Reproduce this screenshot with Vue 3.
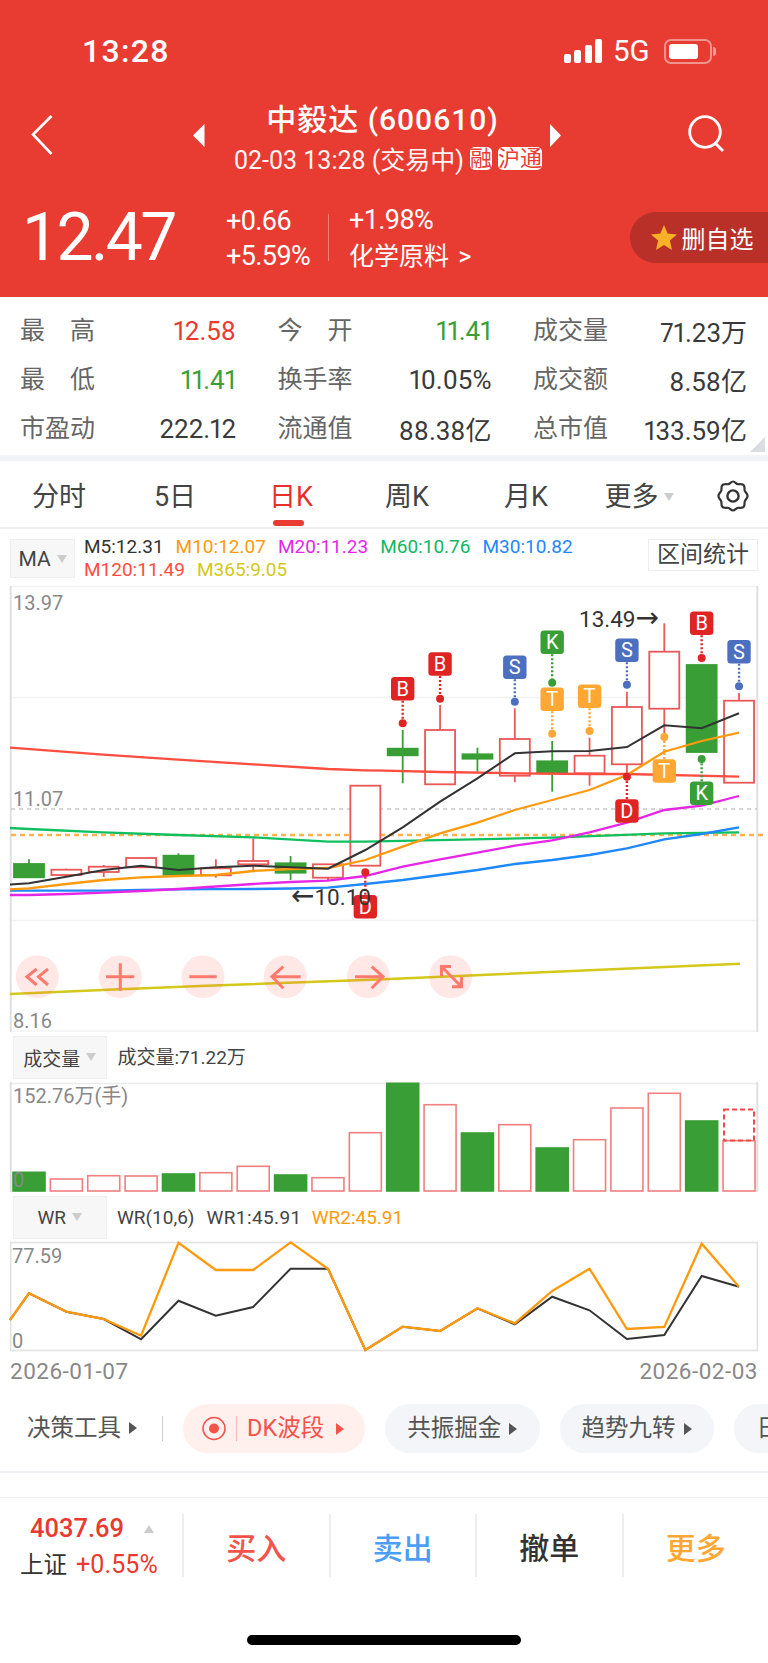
<script setup>
const stats = [
  [['最 高', '12.58', 'up'], ['今 开', '11.41', 'down'], ['成交量', '71.23万', '']],
  [['最 低', '11.41', 'down'], ['换手率', '10.05%', ''], ['成交额', '8.58亿', '']],
  [['市盈动', '222.12', ''], ['流通值', '88.38亿', ''], ['总市值', '133.59亿', '']]
].flat()

const tabs = ['分时', '5日', '日K', '周K', '月K']

const legends = [
  ['M5:12.31', '#333333'], ['M10:12.07', '#ff9a0e'], ['M20:11.23', '#e626e6'],
  ['M60:10.76', '#10b860'], ['M30:10.82', '#1e88ff'], ['M120:11.49', '#ff4d40'], ['M365:9.05', '#d4c81a']
]

const cx = i => 29 + 37.37 * i

// [green?, bodyTop, bodyBottom, wickTop, wickBottom]
const candles = [
  [1, 864, 877.3, 859.3, 878], [0, 869.7, 875, 868.7, 877], [0, 866.7, 872, 865, 877], [0, 858, 867.3, 858, 867.3],
  [1, 855.7, 874.7, 853.3, 877], [0, 868.3, 875.3, 859.3, 877.7], [0, 861, 864.3, 838.3, 871.7], [1, 863.3, 872.7, 856, 880],
  [0, 864.3, 877.7, 864.3, 880], [0, 785.7, 865.7, 785.7, 865.7], [1, 748.7, 755.3, 730, 783.3], [0, 730, 784.3, 705, 784.3],
  [1, 754.3, 758.7, 747.7, 771.7], [0, 739, 775.7, 708.3, 782.3], [1, 761.3, 773.3, 741, 791.7], [0, 755.7, 773.3, 737.7, 785.7],
  [0, 707, 764.3, 691.7, 776.7], [0, 651.7, 708.7, 623.3, 736.7], [1, 665, 752, 665, 752], [0, 700.7, 782.7, 693, 782.7]
].map(([green, top, bottom, wickTop, wickBottom], i) => ({
  green, x: cx(i) - 15, mid: cx(i), top, height: bottom - top, wickTop, wickBottom
}))

const line = (start, ys, end) => {
  const pts = ys.map((y, i) => `${cx(i).toFixed(1)},${y}`)
  return [start ? `10,${start}` : '', ...pts].join(' ').trim()
}

const maLines = [
  { c: '#d4c81a', w: 2.5, p: '10,994 120,989.3 200,986 384,979.3 740,963.7' },
  { c: '#ff4d40', w: 2.3, p: '10,747.7 103,754.7 178,759.7 253,764.3 328,769 365,770.3 384,770.7 440,772 515,773.3 590,774 627,774 739,776.7' },
  { c: '#10c060', w: 2.3, p: '10,828 29,829 103,832.3 178,835 253,837.3 328,841.7 365,841.7 552,837.7 664,833.3 739,832.3' },
  { c: '#1e88ff', w: 2.3, p: line(890.7, [890.7, 890.7, 890.7, 890, 889.3, 889.2, 889, 888.5, 887.7, 884, 880, 875, 870, 864, 860, 855, 848.3, 839.3, 834, 827.3]) },
  { c: '#e626e6', w: 2.3, p: line(895, [895, 894, 892.7, 891, 889, 886.5, 884, 882, 880.7, 876, 866.7, 859.3, 852.7, 845.7, 840.3, 832.3, 822.7, 810, 805.7, 796]) },
  { c: '#ff9a0e', w: 2.3, p: line(889.3, [888.3, 884, 880, 877.3, 876, 875, 871, 869, 868, 860, 846.7, 833.3, 822.7, 810, 800, 790, 775, 751.7, 741, 732.7]) },
  { c: '#333333', w: 2, p: line(884.5, [883.3, 876.7, 870, 865.7, 870, 867.3, 865.7, 867.3, 868.7, 850, 827.3, 801.7, 778.3, 753.3, 751.3, 751, 747, 725.3, 728.3, 713.3]) }
]

const markerColors = { B: '#e02424', D: '#e02424', S: '#4c6fbf', K: '#389e35', T: '#ffa733' }
const markers = [
  [9, 'D', 906.7, 872.3], [10, 'B', 688.7, 723.3], [11, 'B', 664, 698.7], [13, 'S', 667.3, 701.7], [14, 'K', 642.3, 682.7],
  [14, 'T', 699.3, 733.7], [15, 'T', 696.3, 731], [16, 'S', 650.3, 684.7], [16, 'D', 811, 776.7], [17, 'T', 771, 737],
  [18, 'B', 623.3, 658], [18, 'K', 793.3, 759], [19, 'S', 651.7, 686.3]
].map(([i, t, y, dot]) => ({ x: cx(i), t, y, dot, c: markerColors[t] }))

const circles = [37.3, 120.3, 203, 285.3, 368.3, 450.7]

const volTops = [1172.3, 1179, 1175.7, 1176, 1174, 1172.7, 1166.3, 1175, 1177.7, 1132.7, 1083.3, 1104.7, 1133, 1124.7, 1148, 1139.7, 1108, 1093.3, 1121, 1140.7]
const volGreen = [0, 4, 7, 10, 12, 14, 18]
const volumes = volTops.map((top, i) => ({
  x: cx(i) - 16, top, height: 1191 - top, green: volGreen.includes(i)
}))

const wrBlack = line(1320, [1293.3, 1311.7, 1319, 1339.3, 1300.7, 1315.7, 1307, 1268.7, 1268.7, 1350, 1326.7, 1331, 1308.3, 1324.3, 1296.7, 1310.3, 1339, 1335, 1276, 1286.7])
const wrOrange = line(1320, [1293.3, 1311.7, 1319, 1335.7, 1242.7, 1270, 1270, 1242.3, 1268.7, 1350, 1326.7, 1331, 1308.3, 1323.3, 1291, 1268.7, 1329, 1327, 1243.7, 1286.7])

const pills = [['共振掘金', 154.5], ['趋势九转', 154]]
</script>

<template>
  <div class="phone">
    <header class="head">
      <div class="status">
        <span class="time">13:28</span>
        <div class="status-right">
          <span class="signal"><i class="s1"></i><i class="s2"></i><i class="s3"></i><i class="s4"></i></span>
          <span class="net">5G</span>
          <span class="battery"><i></i></span>
          <span class="tip"></span>
        </div>
      </div>

      <div class="nav">
        <svg class="back" width="22" height="40" viewBox="0 0 22 40"><path d="M20.5 1 L2 19.5 L20.5 39" fill="none" stroke="#fff" stroke-width="2.6" /></svg>
        <svg class="tri-l" width="12" height="23" viewBox="0 0 12 23"><path d="M11.5 0 L0 11.5 L11.5 23 Z" fill="#fff" /></svg>
        <div class="center">
          <div class="title">中毅达 (600610)</div>
          <div class="sub">
            <span>02-03 13:28 (交易中)</span>
            <b class="badge">融</b>
            <b class="badge">沪通</b>
          </div>
        </div>
        <svg class="tri-r" width="12" height="23" viewBox="0 0 12 23"><path d="M0 0 L11 11.5 L0 23 Z" fill="#fff" /></svg>
        <svg class="search" width="38" height="38" viewBox="0 0 38 38"><circle cx="17" cy="17" r="15.3" fill="none" stroke="#fff" stroke-width="2.8" /><path d="M27 28 L35 36" stroke="#fff" stroke-width="3" /></svg>
      </div>

      <div class="quote">
        <div class="price">12.47</div>
        <div class="chg">
          <div>+0.66</div>
          <div>+5.59%</div>
        </div>
        <div class="vline"></div>
        <div class="chg chg2">
          <div>+1.98%</div>
          <div class="ind">化学原料 &gt;</div>
        </div>
        <div class="fav">
          <svg width="26" height="25" viewBox="0 0 26 25"><path d="M13 0 L16.6 8.6 L26 9.4 L18.9 15.6 L21 25 L13 20 L5 25 L7.1 15.6 L0 9.4 L9.4 8.6 Z" fill="#f8b028" /></svg>
          <span>删自选</span>
        </div>
      </div>
    </header>

    <section class="stats">
      <div v-for="s in stats" :key="s[0]" class="stat">
        <span class="lab">{{ s[0] }}</span>
        <span class="val" :class="s[2]">{{ s[1] }}</span>
      </div>
      <i class="corner"></i>
    </section>
    <div class="band"></div>

    <nav class="tabs">
      <div v-for="t in tabs" :key="t" class="tab" :class="{ on: t === '日K', m5: t === '月K' }">{{ t }}</div>
      <div class="tab more">更多<i class="tri-d big"></i></div>
      <svg class="gear" width="32" height="32" viewBox="0 0 32 32">
        <path d="M16 1.5 C18 1.5 19 4 21 4.2 C23 4.4 26 3.5 27 5.5 C28 7.5 27 9.5 28 11.3 C29 13 30.6 14 30.6 16 C30.6 18 29 19 28 20.7 C27 22.5 28 24.5 27 26.5 C26 28.5 23 27.6 21 27.8 C19 28 18 30.5 16 30.5 C14 30.5 13 28 11 27.8 C9 27.6 6 28.5 5 26.5 C4 24.5 5 22.5 4 20.7 C3 19 1.4 18 1.4 16 C1.4 14 3 13 4 11.3 C5 9.5 4 7.5 5 5.5 C6 3.5 9 4.4 11 4.2 C13 4 14 1.5 16 1.5 Z" fill="none" stroke="#333" stroke-width="2.2" />
        <circle cx="16" cy="16" r="5.6" fill="none" stroke="#333" stroke-width="2.4" />
      </svg>
    </nav>

    <div class="ind-row">
      <div class="picker ma">MA<i class="tri-d"></i></div>
      <div class="legend">
        <span v-for="l in legends" :key="l[0]" :style="{ color: l[1] }">{{ l[0] }}</span>
      </div>
      <div class="range">区间统计</div>
    </div>

    <svg class="chart main" width="768" height="446" viewBox="0 586 768 446">
      <path d="M11 586.5 H757 M11 697.5 H757 M11 920.5 H757 M11 1031 H757" stroke="#f3f3f3" stroke-width="1.6" />
      <path d="M10.7 586 V1032 M757.3 586 V1032" stroke="#e0e0e0" stroke-width="2" />
      <path d="M11 809 H757" stroke="#c8c8c8" stroke-width="1.6" stroke-dasharray="4 4" />
      <path d="M11 835 H764" stroke="#ffb24d" stroke-width="2.4" stroke-dasharray="5 4" />

      <g v-for="(k, i) in candles" :key="i">
        <line :x1="k.mid" :x2="k.mid" :y1="k.wickTop" :y2="k.wickBottom" :stroke="k.green ? '#389e35' : '#e95a5a'" stroke-width="1.8" />
        <rect :x="k.x" :y="k.top" width="30" :height="k.height" :fill="k.green ? '#389e35' : '#fff'" :stroke="k.green ? '#389e35' : '#ea5757'" stroke-width="1.8" />
      </g>

      <polyline v-for="m in maLines" :key="m.c" :points="m.p" fill="none" :stroke="m.c" :stroke-width="m.w" />

      <g v-for="(m, i) in markers" :key="i">
        <line :x1="m.x" :x2="m.x" :y1="m.y" :y2="m.dot" :stroke="m.c" stroke-width="2.4" stroke-dasharray="2 2" />
        <circle :cx="m.x" :cy="m.dot" r="4" :fill="m.c" />
        <rect :x="m.x - 11.7" :y="m.y - 11.7" width="23.4" height="23.4" rx="3.5" :fill="m.c" />
        <text :x="m.x" :y="m.y + 7" class="mk" text-anchor="middle">{{ m.t }}</text>
      </g>

      <text x="13" y="609.5" class="axis">13.97</text>
      <text x="13" y="806" class="axis">11.07</text>
      <text x="13" y="1028" class="axis">8.16</text>
      <text x="579" y="626.5" class="note">13.49<tspan class="arrow">→</tspan></text>
      <text x="291" y="905" class="note"><tspan class="arrow">←</tspan>10.10</text>

      <g fill="#ff5a4d" fill-opacity="0.14">
        <circle v-for="c in circles" :key="c" :cx="c" cy="976.7" r="21.5" />
      </g>
      <g fill="none" stroke="#ff7a6e" stroke-width="3">
        <path d="M36.7 969 L27 976.7 L36.7 985 M48 969 L38.5 976.7 L48 985" />
        <path d="M106 976.7 H134.3 M120.3 963.3 V990.7" />
        <path d="M189.3 976.7 H216.7" />
        <path d="M271.7 976.7 H300.7 M283.3 966.7 L272 976.7 L283.3 988.3" />
        <path d="M355 976.7 H383 M371.7 966.7 L383 976.7 L371.7 988.3" />
        <path d="M442 967 L460.5 985.7 M451 966.5 H441.5 V976 M461.5 977 V986.7 H452" />
      </g>
    </svg>

    <div class="sub-head">
      <div class="picker">成交量<i class="tri-d"></i></div>
      <div class="sub-text">成交量:71.22万</div>
    </div>

    <svg class="chart vol" width="768" height="110" viewBox="0 1082 768 110">
      <path d="M11 1083.5 H757" stroke="#ececec" stroke-width="1.6" />
      <path d="M10.7 1082 V1192 M757.3 1082 V1192" stroke="#e0e0e0" stroke-width="2" />
      <rect v-for="(b, i) in volumes" :key="i" :x="b.x" :y="b.top" width="32" :height="b.height"
        :fill="b.green ? '#389e35' : '#fff'" :stroke="b.green ? '#389e35' : '#f07f7f'" stroke-width="1.6" />
      <rect x="724" y="1109.5" width="30" height="31" fill="none" stroke="#ee4c4c" stroke-width="2" stroke-dasharray="5 3" />
      <text x="13" y="1103" class="axis">152.76万(手)</text>
      <text x="13" y="1187" class="axis">0</text>
    </svg>

    <div class="sub-head wr-head">
      <div class="picker wr">WR<i class="tri-d"></i></div>
      <div class="sub-text">
        <span class="wr-a">WR(10,6)</span>
        <span class="wr-b">WR1:45.91</span>
        <span class="wr-c">WR2:45.91</span>
      </div>
    </div>

    <svg class="chart wr-chart" width="768" height="111" viewBox="0 1241 768 111">
      <rect x="10.7" y="1242.5" width="746.6" height="108" fill="#fff" stroke="#e2e2e2" stroke-width="1.6" />
      <polyline :points="wrBlack" fill="none" stroke="#333" stroke-width="2" />
      <polyline :points="wrOrange" fill="none" stroke="#ff9a0e" stroke-width="2.3" />
      <text x="12" y="1263" class="axis">77.59</text>
      <text x="12" y="1348" class="axis">0</text>
    </svg>

    <div class="dates"><span>2026-01-07</span><span>2026-02-03</span></div>

    <div class="tools">
      <div class="tool-label">决策工具<i class="tri-r-s"></i></div>
      <i class="tool-sep"></i>
      <div class="pill dk">
        <svg width="24" height="25" viewBox="0 0 24 25"><circle cx="12" cy="12.5" r="11" fill="none" stroke="#f4534a" stroke-width="1.5" /><circle cx="12" cy="12.5" r="5" fill="#f4534a" /></svg>
        <i class="dk-sep"></i>
        <span>DK波段</span>
        <i class="tri-r-s red"></i>
      </div>
      <div v-for="p in pills" :key="p[0]" class="pill" :style="{ width: p[1] + 'px' }">
        <span>{{ p[0] }}</span><i class="tri-r-s"></i>
      </div>
      <div class="pill last"><span>日内</span></div>
    </div>

    <footer class="foot">
      <div class="idx">
        <div class="idx-top"><span class="idx-num">4037.69</span><i class="tri-u"></i></div>
        <div class="idx-bot"><span>上证</span><em>+0.55%</em></div>
      </div>
      <div class="act buy">买入</div>
      <div class="act sell">卖出</div>
      <div class="act undo">撤单</div>
      <div class="act more2">更多</div>
    </footer>
    <div class="home"></div>
  </div>
</template>

<style>
html, body { margin: 0; background: #fff; }
</style>

<style scoped>
.phone {
  width: 768px;
  height: 1663px;
  overflow: hidden;
  background: #fff;
  display: flex;
  flex-direction: column;
  font-family: Roboto, "Noto Sans CJK SC", sans-serif;
  color: #333;
}
i { display: block; font-style: normal; }
.head { background: #e83c32; height: 297px; color: #fff; flex: none; }
.status { height: 100px; padding: 2px 52px 0 82px; box-sizing: border-box; display: flex; justify-content: space-between; align-items: center; }
.time { font-size: 32px; font-weight: 500; letter-spacing: 1.3px; line-height: 36px; }
.status-right { display: flex; align-items: center; }
.signal { display: flex; align-items: flex-end; gap: 3.3px; height: 24px; }
.signal i { width: 7px; background: #fff; border-radius: 2px; }
.s1 { height: 9px; } .s2 { height: 13px; } .s3 { height: 18px; } .s4 { height: 24px; }
.net { font-size: 29.5px; line-height: 30px; margin-left: 11px; width: 51px; }
.battery { width: 48px; height: 25px; box-sizing: border-box; border: 2px solid rgba(255,255,255,.45); border-radius: 7px; padding: 3px 12px 3px 3px; }
.battery i { height: 100%; background: #fff; border-radius: 3px; }
.tip { width: 3px; height: 9px; background: rgba(255,255,255,.5); border-radius: 0 3px 3px 0; margin-left: 1px; }
.nav { height: 90px; display: flex; align-items: flex-start; padding-left: 31px; position: relative; }
.back { margin-top: 15px; flex: none; }
.tri-l { margin: 24px 0 0 140px; flex: none; }
.tri-r { margin-top: 24px; flex: none; }
.center { width: 345px; flex: none; display: flex; flex-direction: column; align-items: center; }
.title { font-size: 30px; font-weight: 500; line-height: 36px; margin: 2px 0 -2px 10px; letter-spacing: 1px; white-space: nowrap; }
.sub { height: 44px; margin-left: 21px; display: flex; align-items: center; font-size: 25px; white-space: nowrap; gap: 6px; color: #fff; }
.sub span { letter-spacing: 0; opacity: .95; }
.badge { background: #fff; color: #e83c32; font-size: 22px; font-weight: 400; height: 23px; line-height: 23px; border-radius: 5px; padding: 0; }
.search { margin: 15px 0 0 126px; flex: none; }
.quote { height: 107px; padding: 0 0 12px 22px; box-sizing: border-box; display: flex; align-items: center; }
.price { font-size: 66px; font-weight: 400; letter-spacing: -2.6px; line-height: 70px; width: 204px; flex: none; }
.chg { font-size: 27px; line-height: 35px; letter-spacing: -0.6px; width: 102px; white-space: nowrap; flex: none; margin-top: 2px; }
.vline { width: 1px; height: 47px; background: rgba(255,255,255,.35); flex: none; }
.chg2 { margin-left: 20px; width: 150px; }
.ind { font-size: 25px; letter-spacing: 0; word-spacing: 3px; margin-top: 1px; }
.fav { margin-left: auto; width: 138.5px; height: 51.5px; background: #b83028; border-radius: 26px 0 0 26px; display: flex; align-items: center; padding-left: 21px; box-sizing: border-box; gap: 5px; font-size: 24px; white-space: nowrap; flex: none; }

.stats { position: relative; height: 158px; box-sizing: border-box; padding: 8px 0 0 20px; display: grid; grid-template-columns: 216px 214px 214px; grid-auto-rows: 49px; column-gap: 41.5px; flex: none; }
.stat { display: flex; justify-content: space-between; align-items: center; font-size: 26px; }
.lab { width: 75px; text-align: justify; text-align-last: justify; color: #666; white-space: nowrap; font-size: 25px; margin-top: -3px; }
.val { color: #3a3a3a; white-space: nowrap; font-feature-settings: "pnum"; margin-top: 2px; }
.up { color: #e83a30; }
.down { color: #3a9e35; }
.corner { position: absolute; right: 3px; bottom: 3px; width: 0; height: 0; border-left: 15px solid transparent; border-bottom: 15px solid #d9dce2; }
.band { height: 6px; background: #f2f3f7; flex: none; }
.tabs { height: 68px; box-sizing: border-box; border-bottom: 2px solid #eee; display: flex; padding-left: 1px; align-items: flex-start; position: relative; flex: none; }
.tab { width: 116px; text-align: center; font-size: 27px; line-height: 72px; color: #444; position: relative; flex: none; white-space: nowrap; }
.tab.on { color: #e8302a; }
.tab.on::after { content: ""; position: absolute; left: 40px; top: 59px; width: 31px; height: 6px; background: #e83c32; border-radius: 3px; }
.tab.m5 { left: 3px; }
.more { display: flex; justify-content: center; align-items: center; height: 72px; }
.tri-d { width: 0; height: 0; border-left: 5.5px solid transparent; border-right: 5.5px solid transparent; border-top: 8px solid #ccc; }
.tri-d.big { margin-left: 5px; }
.gear { position: absolute; left: 717px; top: 19px; }
.ind-row { height: 57px; box-sizing: border-box; display: flex; padding: 10px 10px 0; align-items: flex-start; flex: none; }
.picker { background: #f7f7f7; border: 1px solid #eee; box-sizing: border-box; display: flex; align-items: center; justify-content: center; gap: 6px; flex: none; font-size: 19px; color: #444; }
.ma { width: 65px; height: 39px; font-size: 21px; margin-right: 9px; }
.legend { display: flex; flex-wrap: wrap; width: 560px; column-gap: 12px; margin-top: -4px; font-size: 19px; line-height: 23px; }
.range { width: 110px; height: 32px; border: 1px solid #eee; box-sizing: border-box; text-align: center; font-size: 23px; line-height: 30px; color: #444; margin-left: auto; flex: none; white-space: nowrap; }
.chart { display: block; flex: none; overflow: visible; }
.mk { font: 400 20px Roboto, sans-serif; fill: #fff; }
.axis { font: 400 20px Roboto, "Noto Sans CJK SC", sans-serif; fill: #888; }
.note { font: 400 22.5px Roboto, sans-serif; fill: #333; }
.arrow { font-family: "DejaVu Sans", sans-serif; font-size: 28px; }
.sub-head { height: 50px; box-sizing: border-box; padding: 4px 13px 0; display: flex; align-items: flex-start; flex: none; }
.sub-head .picker { width: 93.5px; height: 42.5px; }
.sub-text { margin: 0 0 0 11px; line-height: 43px; font-size: 19px; color: #444; white-space: nowrap; display: flex; }
.wr-head { height: 49px; }
.wr-head .sub-text { margin-left: 10.5px; }
.wr-b { margin-left: 12px; letter-spacing: 0.4px; }
.wr-c { margin-left: 10px; color: #ff9a0e; }
.dates { height: 38px; display: flex; justify-content: space-between; padding: 0 10px; align-items: center; font-size: 22.5px; letter-spacing: 0.5px; color: #888; flex: none; }
.tools { height: 83px; box-sizing: border-box; padding: 14px 0 0 27px; display: flex; align-items: flex-start; border-bottom: 2px solid #f0f1f5; overflow: hidden; flex: none; }
.tool-label { display: flex; align-items: center; font-size: 23.5px; line-height: 48px; width: 135px; flex: none; color: #555; white-space: nowrap; }
.tri-r-s { width: 0; height: 0; border-top: 6px solid transparent; border-bottom: 6px solid transparent; border-left: 8px solid #555; margin-left: 8px; flex: none; }
.tri-r-s.red { border-left-color: #f4534a; margin-left: 12px; }
.tool-sep { width: 1px; height: 25px; background: #ccc; margin: 12px 20px 0 0; flex: none; }
.pill { height: 49px; border-radius: 25px; background: #f3f5f9; margin-right: 20px; display: flex; align-items: center; justify-content: center; font-size: 23.5px; color: #555; flex: none; box-sizing: border-box; white-space: nowrap; }
.pill span { line-height: 49px; }
.dk { width: 182px; background: #fff0ee; color: #f4534a; justify-content: flex-start; padding-left: 19px; }
.dk-sep { width: 1px; height: 25px; background: #f9b9b3; margin: 0 10px 0 10px; }
.last { width: 100px; justify-content: flex-start; padding-left: 23px; }
.foot { margin-top: 24px; height: 138px; box-sizing: border-box; border-top: 1px solid #eee; padding-top: 16px; display: grid; grid-template-columns: 182px repeat(4, 146.5px); align-items: start; flex: none; }
.idx { height: 63px; position: relative; }
.idx-top { display: flex; align-items: center; padding-left: 30px; height: 26px; margin-top: 1px; }
.idx-num { font-size: 25.5px; font-weight: 500; color: #e83a30; line-height: 26px; width: 114px; }
.tri-u { width: 0; height: 0; border-left: 5.5px solid transparent; border-right: 5.5px solid transparent; border-bottom: 8px solid #ccc; margin-top: 2px; }
.idx-bot { display: flex; align-items: center; padding-left: 20px; margin-top: 9px; font-size: 23.5px; line-height: 30px; color: #333; white-space: nowrap; }
.idx-bot em { font-style: normal; color: #e83a30; font-size: 25px; letter-spacing: 0.1px; margin-left: 9px; }
.act { height: 63px; border-left: 2px solid #eee; box-sizing: border-box; text-align: center; font-size: 30px; line-height: 70px; font-weight: 500; }
.buy { color: #f4534a; }
.sell { color: #4a9ef5; }
.undo { color: #333; font-weight: 500; }
.more2 { color: #ffa733; }
.home { width: 274px; height: 10px; border-radius: 5px; background: #000; margin: 0 auto; flex: none; }
</style>
